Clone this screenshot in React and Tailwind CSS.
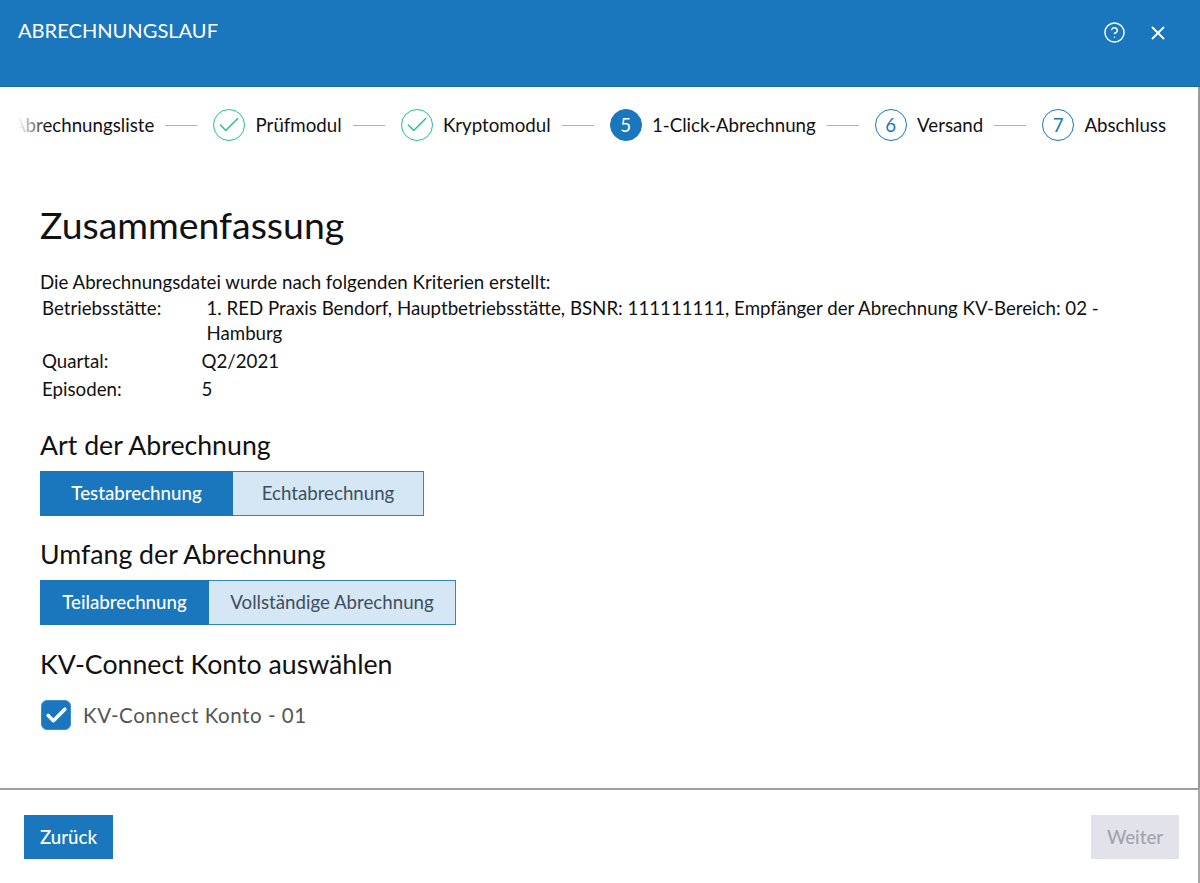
import { Check, CircleHelp, X } from "lucide-react";

function Connector() {
  return <div className="ml-[11px] mr-[16px] h-px w-[32px] shrink-0 bg-[#aeb2b5]" />;
}

function DoneStep({ label }) {
  return (
    <div className="flex shrink-0 items-center">
      <div className="flex h-8 w-8 items-center justify-center rounded-full border-[1.5px] border-[#1fc292]">
        <Check className="h-[26px] w-[26px] text-[#1fc292]" strokeWidth={1.3} />
      </div>
      <span className="ml-[10.3px] whitespace-nowrap">{label}</span>
    </div>
  );
}

function NumberStep({ number, label, active }) {
  return (
    <div className="flex shrink-0 items-center">
      <div
        className={
          active
            ? "flex h-8 w-8 items-center justify-center rounded-full border-[1.5px] border-[#1a76bd] bg-[#1a76bd] text-white"
            : "flex h-8 w-8 items-center justify-center rounded-full border-[1.5px] border-[#1a76bd] text-[#1a76bd]"
        }
      >
        {number}
      </div>
      <span className="ml-[10.3px] whitespace-nowrap">{label}</span>
    </div>
  );
}

function Toggle({ active, other, activeWidth, otherWidth }) {
  return (
    <div className="mt-[9px] flex h-[45px] w-fit border border-[#2b86cd]">
      <div className={`${activeWidth} -my-px -ml-px flex items-center justify-center bg-[#1a76bd] font-medium text-white`}>{active}</div>
      <div className={`${otherWidth} flex items-center justify-center bg-[#d5e6f4] text-[#3e4e5e]`}>{other}</div>
    </div>
  );
}

export default function App() {
  return (
    <div className="flex h-[883px] w-[1200px] flex-col overflow-hidden bg-white font-['Lato','Open_Sans',sans-serif] text-[18.7px] text-[#111]">
      <header className="flex h-[87px] shrink-0 items-start justify-between border-b border-[#176aa9] bg-[#1a76bd] pl-[18px] pr-[31px] pt-[18px] text-white">
        <h2 className="text-[20.1px] leading-[24px]">ABRECHNUNGSLAUF</h2>
        <div className="flex items-center gap-[21px] pt-[3px]">
          <CircleHelp className="h-[23px] w-[23px]" strokeWidth={1.5} />
          <X className="h-[22px] w-[22px]" strokeWidth={2} />
        </div>
      </header>

      <div className="relative flex-1 border-r-2 border-[#9a9a9a]">
        <nav className="ml-[18px] flex h-[76px] items-center justify-end overflow-hidden pr-[32px]">
          <span className="shrink-0 whitespace-nowrap">Abrechnungsliste</span>
          <Connector />
          <DoneStep label="Prüfmodul" />
          <Connector />
          <DoneStep label="Kryptomodul" />
          <Connector />
          <NumberStep number="5" label="1-Click-Abrechnung" active />
          <Connector />
          <NumberStep number="6" label="Versand" />
          <Connector />
          <NumberStep number="7" label="Abschluss" />
        </nav>
        <div className="absolute left-[18px] top-[20px] h-[36px] w-[30px] bg-gradient-to-r from-white to-white/0" />

        <main className="pl-[40px] pr-[90px] pt-[39px]">
          <h1 className="text-[37.4px] leading-[46px]">Zusammenfassung</h1>
          <p className="mt-[20px] leading-[28px]">Die Abrechnungsdatei wurde nach folgenden Kriterien erstellt:</p>
          <dl className="grid grid-cols-[159.5px_1fr] pl-[2px] leading-[25px]">
            <dt>Betriebsstätte:</dt>
            <dd className="pl-[5px]">
              1. RED Praxis Bendorf, Hauptbetriebsstätte, BSNR: 111111111, Empfänger der Abrechnung KV-Bereich: 02 - Hamburg
            </dd>
            <dt className="mt-[3px]">Quartal:</dt>
            <dd className="mt-[3px]">Q2/2021</dd>
            <dt className="mt-[3px]">Episoden:</dt>
            <dd className="mt-[3px]">5</dd>
          </dl>

          <h3 className="mt-[26px] text-[26.7px] leading-[34px]">Art der Abrechnung</h3>
          <Toggle active="Testabrechnung" other="Echtabrechnung" activeWidth="w-[193px]" otherWidth="w-[190px]" />

          <h3 className="mt-[22px] text-[26.7px] leading-[33px]">Umfang der Abrechnung</h3>
          <Toggle active="Teilabrechnung" other="Vollständige Abrechnung" activeWidth="w-[169px]" otherWidth="w-[246px]" />

          <h3 className="mt-[22px] text-[26.7px] leading-[34px]">KV-Connect Konto auswählen</h3>
          <div className="mt-[19px] flex items-center">
            <div className="ml-px flex h-[30px] w-[30px] items-center justify-center rounded-[6px] border border-[#3a8fd2] bg-[#1a76bd]">
              <Check className="h-[25px] w-[25px] text-white" strokeWidth={3.4} />
            </div>
            <span className="ml-[12px] text-[20.5px] tracking-[0.55px] text-[#555]">KV-Connect Konto - 01</span>
          </div>
        </main>
      </div>

      <footer className="flex h-[95px] shrink-0 items-start justify-between border-t-2 border-r-2 border-t-[#9f9f9f] border-r-[#a8a8a8] pl-[24px] pr-[19px] pt-[25px]">
        <button className="h-[44px] w-[89px] bg-[#1a76bd] font-medium text-white">Zurück</button>
        <button className="h-[44px] w-[88px] bg-[#e2e3ea] font-medium text-[#a0a3ad]">Weiter</button>
      </footer>
    </div>
  );
}
